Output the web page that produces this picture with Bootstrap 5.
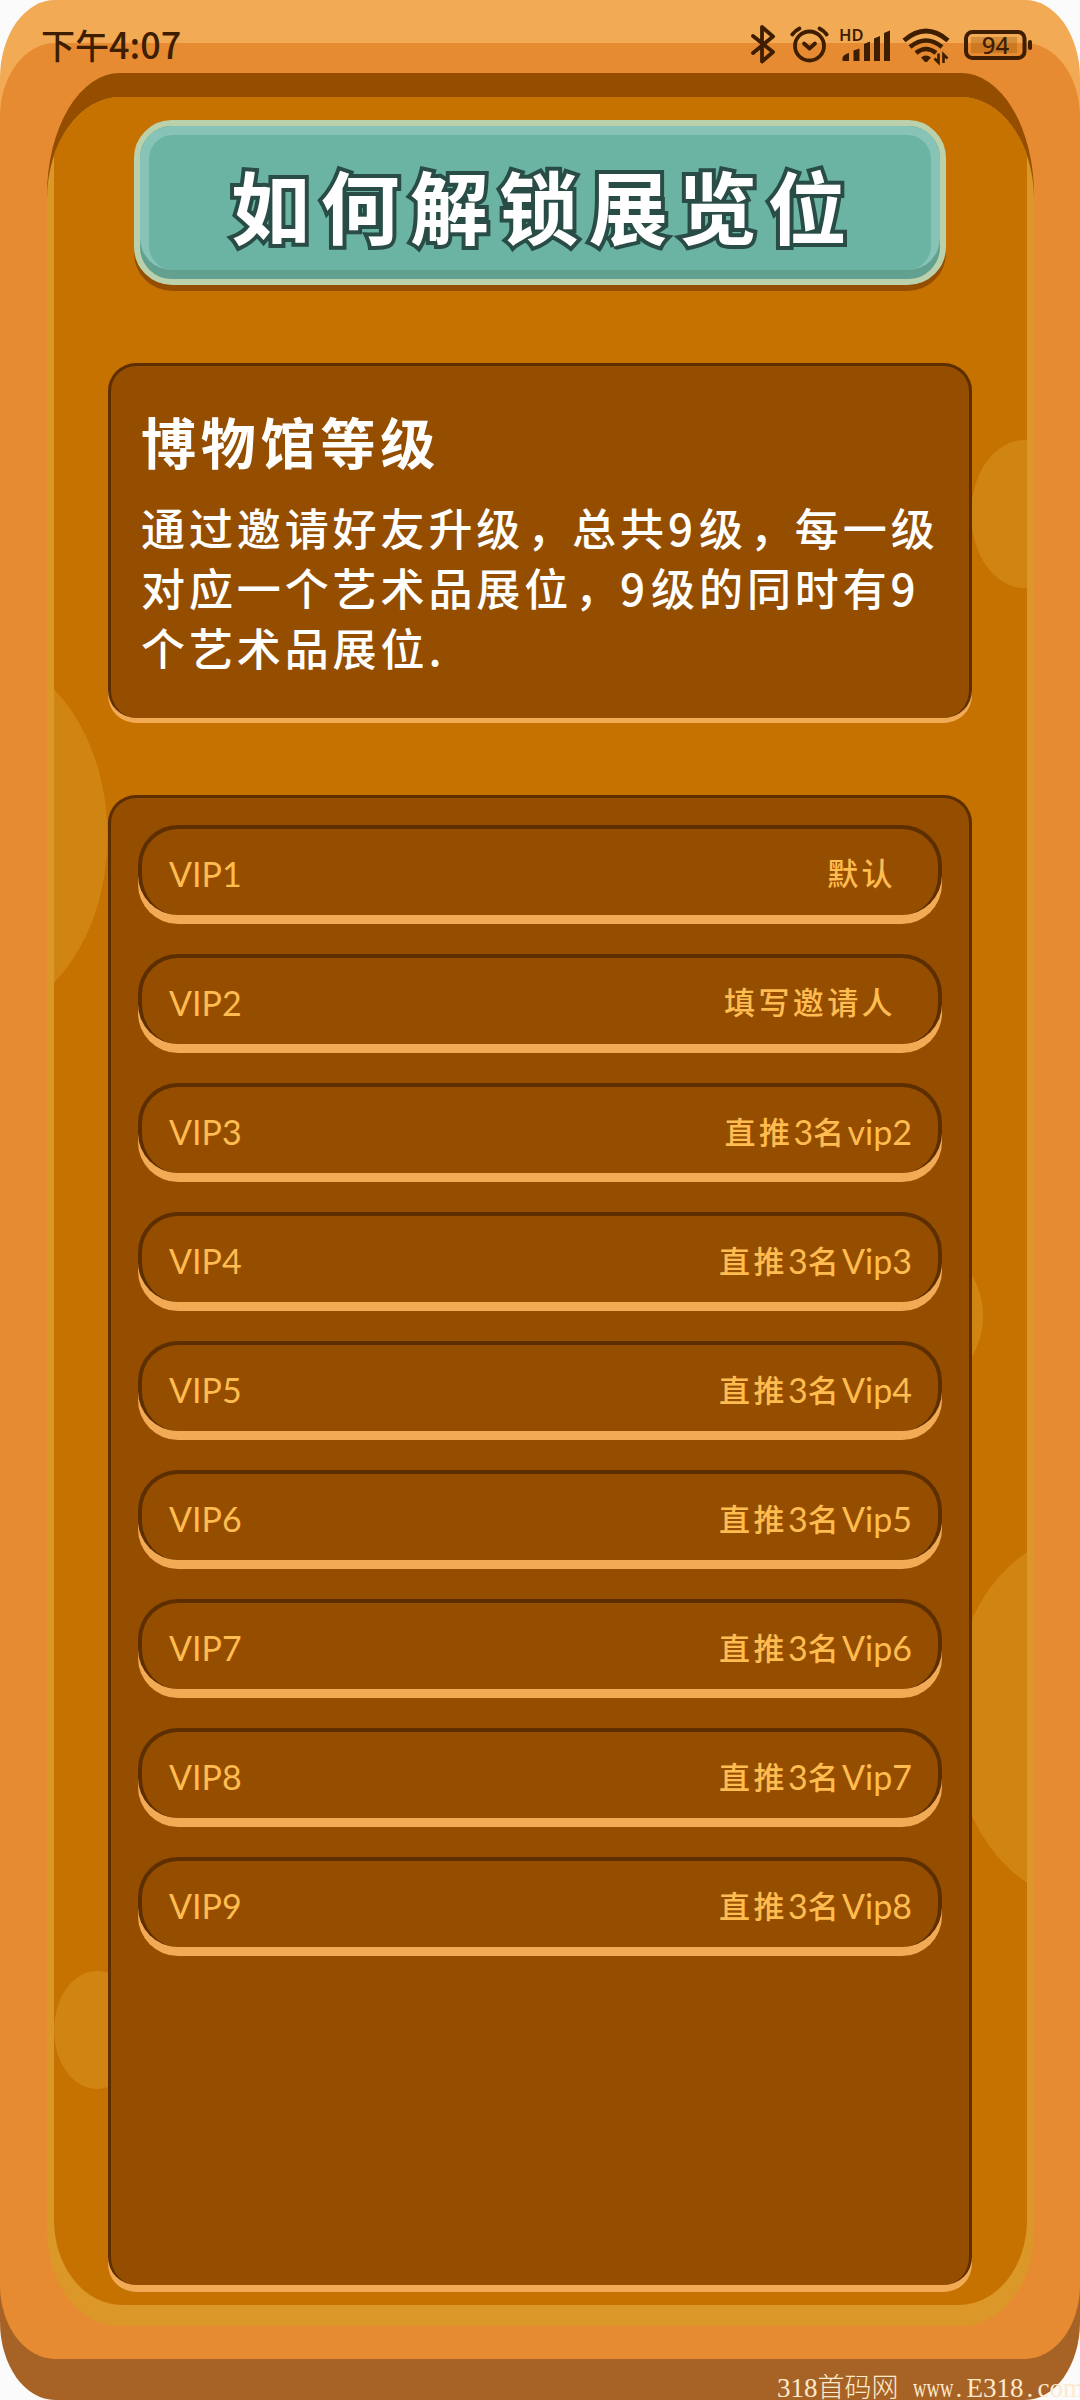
<!DOCTYPE html>
<html lang="zh-CN">
<head>
<meta charset="utf-8">
<meta name="viewport" content="width=device-width, initial-scale=1">
<title>如何解锁展览位</title>
<link href="https://cdn.jsdelivr.net/npm/bootstrap@5.3.0/dist/css/bootstrap.min.css" rel="stylesheet">
<style>
  body { width: 1080px; height: 2400px; background: #fbfbfb; overflow: hidden; font-family: "Noto Sans CJK SC", sans-serif; }
  .shell { height: 2400px; padding: 43px 0 41px; border-radius: 55px / 78px; background: linear-gradient(#f2aa54 50%, #a66325 50%); }
  .rim { height: 100%; padding: 30px 46px 33px 47px; border-radius: 55px / 74px; background: #e68b31; }
  .well { height: 100%; padding-top: 24px; border-radius: 73px / 122px 122px 95px 95px; background: linear-gradient(#954e00 50%, #db9728 50%); }
  .lip { height: 100%; padding: 0 7px 21px; border-radius: 73px / 102px 102px 95px 95px; background: #db9728; overflow: hidden; }
  .floor { height: 100%; background: #c57200; border-radius: 0 0 68px 68px / 0 0 85px 85px; overflow: hidden; padding: 23px 55px 0 54px; }
  .spots { left: 0; top: 0; }

  .sign { margin: 0 26px; height: 165px; border: 6px solid #bbd1ab; border-radius: 38px; background: #62a190; padding-bottom: 9px; box-shadow: 0 6px 0 #954e00; }
  .sign-glow { height: 100%; border-radius: 32px; background: #88c3b8; padding: 9px 9px 0; }
  .sign-face { height: 100%; border-radius: 24px; background: #6bb3a3; }
  .sign-title { font-size: 79px; font-weight: 700; letter-spacing: 10.4px; line-height: 1; color: #fff; -webkit-text-stroke: 8px #294c46; paint-order: stroke fill; text-shadow: 0 3px 0 #294c46; white-space: nowrap; padding: 3px 0 0 8px; }

  .panel { border: 3px solid #5d2e00; border-bottom: 0; border-radius: 28px; background: #954e00; }
  .intro { margin-top: 78px; height: 355px; box-shadow: 0 5px 0 #f2aa54; padding: 42px 30px 0; color: #fff; }
  .intro-title { font-size: 55px; font-weight: 700; letter-spacing: 4.8px; line-height: 64px; margin: 0 0 25px; }
  .intro-text { font-size: 44px; font-weight: 500; letter-spacing: 3.9px; line-height: 60px; margin: 0; white-space: nowrap; }
  .cm { margin: 0 -3px 0 3px; }
  .nn { letter-spacing: 6px; }
  .levels { margin-top: 77px; height: 1490px; box-shadow: 0 7px 0 #f2aa54; padding: 27px; }
  .levels-list { gap: 39px; }
  .slot { height: 90px; border: 4px solid #5d2e00; border-bottom: 0; border-radius: 40px; background: #954e00; box-shadow: 0 9px 0 #f2aa54; color: #ffbc50; padding: 4px 26px 0 27px; font: 400 34px/1 Lato, "Noto Sans CJK SC", sans-serif; }
  .zh { font: 500 31px/1 "Noto Sans CJK SC", sans-serif; letter-spacing: 3.4px; vertical-align: 1px; }
  .wait { padding: 0 16px 5px 0; }

  .status { left: 0; top: 0; width: 1080px; height: 90px; padding: 0 44px 0 41px; color: #3f1e00; z-index: 3; }
  .clock { font: 500 36px/1 "Noto Sans CJK SC", sans-serif; padding-bottom: 3px; }
  .clock-zh { font-size: 34px; }
  .status-icons { gap: 8px; }
  .status text { font-family: "Noto Sans", sans-serif; fill: #3f1e00; }
  .credit { right: 0; bottom: -2px; width: 303px; z-index: 3; color: #fde9cb; font: 27px/28px "Liberation Serif", "Noto Sans CJK SC", serif; white-space: pre; font-weight: 300; overflow: hidden; }
  .www { display: inline-block; width: 40px; transform: scaleX(.69); transform-origin: left; }
  .dot { display: inline-block; width: 14px; padding-left: 3px; }
</style>
<script src="https://cdn.jsdelivr.net/npm/bootstrap@5.3.0/dist/js/bootstrap.bundle.min.js"></script>
</head>
<body class="position-relative m-0">

<header class="status position-absolute d-flex justify-content-between align-items-center">
  <div class="clock"><span class="clock-zh">下午</span>4:07</div>
  <div class="status-icons d-flex">
    <svg width="30" height="44" viewBox="750 24 30 44" fill="none" stroke="#3f1e00" stroke-width="3.8" stroke-linecap="round" stroke-linejoin="round"><path d="M753 37l20 16-11 9.500V28l11 9.500-20 16.500"/></svg>
    <svg width="44" height="44" viewBox="788 24 44 44" fill="none" stroke="#3f1e00" stroke-width="3.8" stroke-linecap="round" stroke-linejoin="round"><circle cx="809.500" cy="47" r="14.500"/><path d="M804 44.500l5.500 5 5.500-5M792.300 35.500q3-4 7.200-6M826.700 35.500q-3-4-7.200-6"/></svg>
    <svg width="52" height="44" viewBox="840 24 52 44" fill="#3f1e00"><text x="839" y="42" font-size="16.500" font-weight="600">HD</text><path d="M842.500 62v-3.500q1.500-3.500 6.500-4.500v8zM853.500 62V51.500l6-2V62zM864 62V45l6-2.500V62zM874 62V39.500l6-2.500v25zM884 62V34l6-2.500V62z"/></svg>
    <svg width="52" height="44" viewBox="900 24 52 44" fill="none" stroke="#3f1e00" stroke-width="4.600"><path d="M904 41.500q22-19 44 0M910 48q16-13 32 0M916 54q10-8 20 0"/><path d="M921 58.500q5-4 10 0l-4 4.500h-2z" fill="#3f1e00" stroke="none"/><path d="M938.500 54.500v9l-4-4M943.500 64v-8.500l4 4" stroke-width="2.600"/></svg>
    <svg width="76" height="44" viewBox="960 24 76 44"><rect x="971" y="38" width="46" height="16" fill="#954e00" opacity=".3"/><rect x="966" y="33" width="58.500" height="26" rx="6.500" fill="none" stroke="#3f1e00" stroke-width="4"/><rect x="1028" y="41" width="4" height="10" rx="2" fill="#3f1e00"/><text x="995.500" y="54.500" font-size="24" font-weight="500" text-anchor="middle">94</text></svg>
  </div>
</header>

<main class="shell">
  <div class="rim">
    <div class="well">
      <div class="lip">
        <div class="floor position-relative">
          <svg class="spots position-absolute" width="973" height="2208" viewBox="54 97 973 2208" fill="#d08412">
            <ellipse cx="-23.500" cy="836" rx="131" ry="182"/>
            <ellipse cx="1024" cy="514" rx="53" ry="74"/>
            <ellipse cx="939" cy="1316" rx="44" ry="61"/>
            <ellipse cx="1082" cy="1717.500" rx="131" ry="182"/>
            <ellipse cx="97" cy="2030" rx="43" ry="59"/>
          </svg>

          <div class="sign position-relative">
            <div class="sign-glow">
              <div class="sign-face d-flex justify-content-center align-items-center">
                <h1 class="sign-title m-0">如何解锁展览位</h1>
              </div>
            </div>
          </div>

          <section class="panel intro position-relative">
            <h2 class="intro-title">博物馆等级</h2>
            <p class="intro-text">通过邀请好友升级<span class="cm">，</span>总共<span class="nn">9</span>级<span class="cm">，</span>每一级<br>对应一个艺术品展位<span class="cm">，</span><span class="nn">9</span>级的同时有<span class="nn">9</span><br>个艺术品展位.</p>
          </section>

          <section class="panel levels position-relative">
            <div class="levels-list d-flex flex-column">
              <div class="slot d-flex justify-content-between align-items-center"><span>VIP1</span><span class="zh wait">默认</span></div>
              <div class="slot d-flex justify-content-between align-items-center"><span>VIP2</span><span class="zh wait">填写邀请人</span></div>
              <div class="slot d-flex justify-content-between align-items-center"><span>VIP3</span><span><span class="zh">直推</span>3<span class="zh">名</span>vip2</span></div>
              <div class="slot d-flex justify-content-between align-items-center"><span>VIP4</span><span><span class="zh">直推</span>3<span class="zh">名</span>Vip3</span></div>
              <div class="slot d-flex justify-content-between align-items-center"><span>VIP5</span><span><span class="zh">直推</span>3<span class="zh">名</span>Vip4</span></div>
              <div class="slot d-flex justify-content-between align-items-center"><span>VIP6</span><span><span class="zh">直推</span>3<span class="zh">名</span>Vip5</span></div>
              <div class="slot d-flex justify-content-between align-items-center"><span>VIP7</span><span><span class="zh">直推</span>3<span class="zh">名</span>Vip6</span></div>
              <div class="slot d-flex justify-content-between align-items-center"><span>VIP8</span><span><span class="zh">直推</span>3<span class="zh">名</span>Vip7</span></div>
              <div class="slot d-flex justify-content-between align-items-center"><span>VIP9</span><span><span class="zh">直推</span>3<span class="zh">名</span>Vip8</span></div>
            </div>
          </section>
        </div>
      </div>
    </div>
  </div>
</main>

<div class="credit position-absolute">318首码网<span class="dot"></span><span class="www">www</span><span class="dot">.</span>E318<span class="dot">.</span>com</div>
</body>
</html>
